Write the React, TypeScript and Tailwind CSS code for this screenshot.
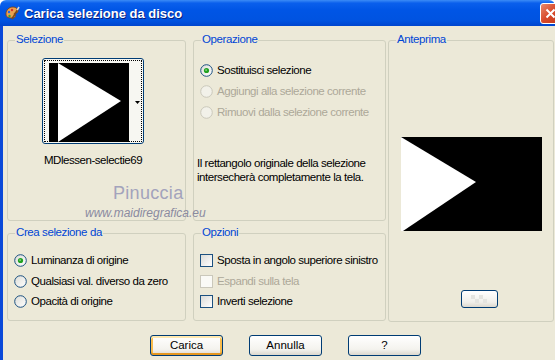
import React from "react";

const font = "font-['Liberation_Sans',Arial,sans-serif]";

const Radio = ({ checked = false, disabled = false }: { checked?: boolean; disabled?: boolean }) => (
  <svg width="13" height="13" viewBox="0 0 13 13" className="shrink-0">
    <defs>
      <linearGradient id="rg" x1="0" y1="0" x2="1" y2="1">
        <stop offset="0" stopColor="#DCDCD7" />
        <stop offset="1" stopColor="#FFFFFF" />
      </linearGradient>
    </defs>
    <circle
      cx="6.5"
      cy="6.5"
      r="5.8"
      fill={disabled ? "#F2F1E9" : "url(#rg)"}
      stroke={disabled ? "#CAC8BB" : "#1C5180"}
      strokeWidth="1"
    />
    {checked && (
      <>
        <circle cx="6.5" cy="6.5" r="2.6" fill="#21A121" />
        <circle cx="6.1" cy="6.1" r="0.9" fill="#8DDC8D" />
      </>
    )}
  </svg>
);

const Checkbox = ({ disabled = false }: { disabled?: boolean }) => (
  <div
    className={
      disabled
        ? "w-[13px] h-[13px] shrink-0 border border-[#CAC8BB] bg-[#FAFAF6]"
        : "w-[13px] h-[13px] shrink-0 border border-[#1C5180] bg-[linear-gradient(135deg,#DCDCD7,#FFFFFF)]"
    }
  />
);

const Group = ({
  label,
  className,
  children,
}: {
  label: string;
  className?: string;
  children?: React.ReactNode;
}) => (
  <div className={"relative border border-[#D0D0BF] rounded-[3px] " + (className ?? "")}>
    <span className="absolute -top-[8px] left-[7px] px-[1px] bg-[#ECE9D8] text-[#0046D5] leading-[13px] tracking-[-0.4px]">
      {label}
    </span>
    {children}
  </div>
);

const XPButton = ({ label, isDefault = false }: { label: string; isDefault?: boolean }) => (
  <div
    className={
      "w-[73px] h-[21px] flex items-center justify-center rounded-[3px] border border-[#003C74] bg-[linear-gradient(to_bottom,#FFFFFF,#F4F3EE_70%,#DCD8CE)] text-black " +
      (isDefault
        ? "shadow-[inset_0_2px_0_#FFE9B0,inset_0_-2px_0_#E5971F,inset_2px_0_0_#F9BC4C,inset_-2px_0_0_#F9BC4C]"
        : "")
    }
  >
    {label}
  </div>
);

const TitleIcon = () => (
  <svg width="16" height="16" viewBox="0 0 16 16">
    <path d="M2 9c0-4 3-7 7-7 3 0 5 2 5 4 0 2-2 2-3 2-1 0-1 1 0 2 1 1 0 3-3 3-4 0-6-1-6-4z" fill="#E9A250" stroke="#7A3C12" strokeWidth="0.8" />
    <circle cx="5" cy="7" r="1.2" fill="#2A62E0" />
    <circle cx="8" cy="5" r="1.2" fill="#D8302A" />
    <circle cx="5.5" cy="11" r="1.2" fill="#2EA43A" />
    <path d="M8 14 L14 4" stroke="#7A4A1C" strokeWidth="1.6" />
    <path d="M13.2 5.2 L15 2" stroke="#D9D9D9" strokeWidth="1.6" />
  </svg>
);

const TitleBar = () => (
  <div className="h-[26px] shrink-0 flex items-center rounded-t-[6px] bg-[linear-gradient(to_bottom,#3C8CF6_0%,#0A5FEC_12%,#0055E5_40%,#0053E0_80%,#0046CE_100%)]">
    <div className="ml-[4px] mr-[4px]">
      <TitleIcon />
    </div>
    <span className="text-white font-bold text-[13px] [text-shadow:1px_1px_0_#0A1E7A]">
      Carica selezione da disco
    </span>
    <div className="ml-auto -mr-[6px] mt-[1px] w-[21px] h-[21px] rounded-[3px] border border-white bg-[linear-gradient(135deg,#E88A6C,#D8492A_50%,#C23A1A)] flex items-center justify-center">
      <svg width="11" height="11" viewBox="0 0 11 11">
        <path d="M1.5 1.5 L9.5 9.5 M9.5 1.5 L1.5 9.5" stroke="white" strokeWidth="2" />
      </svg>
    </div>
  </div>
);

export default function App() {
  return (
    <div className={"w-[555px] h-[360px] overflow-hidden flex flex-col text-[11.5px] leading-[13px] " + font}>
      <TitleBar />
      <div className="flex flex-1">
        <div className="w-[3px] bg-[#0A49D9]" />
        <div className="relative flex-1 bg-[#ECE9D8] pl-[4px] pt-[14px]">
          <div className="flex">
            <div className="grid grid-cols-[179px_193px] grid-rows-[181px_88px] gap-x-[7px] gap-y-[12px]">
              <Group label="Selezione">
                <div className="ml-[34px] mt-[17px] w-[102px] flex flex-col items-center">
                  <div className="w-[102px] h-[86px] rounded-[3px] border border-[#003C74] bg-[#F7F7F2] p-[1px]">
                    <div className="w-full h-full border border-dotted border-black flex pl-[4px] pt-[2px]">
                      <svg width="80" height="79" viewBox="0 0 80 79" className="shrink-0">
                        <rect width="80" height="79" fill="black" />
                        <polygon points="9,0 72,38 9,79" fill="white" />
                      </svg>
                      <div className="flex-1 flex items-center justify-end pr-[1px]">
                        <svg width="5" height="3" viewBox="0 0 5 3">
                          <polygon points="0,0 5,0 2.5,3" fill="black" />
                        </svg>
                      </div>
                    </div>
                  </div>
                  <div className="mt-[10px] text-black tracking-[-0.45px] whitespace-nowrap">
                    MDlessen-selectie69
                  </div>
                </div>
              </Group>

              <Group label="Operazione">
                <div className="pt-[19px] pl-[6px] flex flex-col tracking-[-0.45px]">
                  <div className="h-[21px] flex items-center gap-[4px] text-black">
                    <Radio checked />
                    <span>Sostituisci selezione</span>
                  </div>
                  <div className="h-[21px] flex items-center gap-[4px] text-[#ACA899]">
                    <Radio disabled />
                    <span>Aggiungi alla selezione corrente</span>
                  </div>
                  <div className="h-[21px] flex items-center gap-[4px] text-[#ACA899]">
                    <Radio disabled />
                    <span>Rimuovi dalla selezione corrente</span>
                  </div>
                  <p className="mt-[33px] -ml-[3px] leading-[14px] text-black">
                    Il rettangolo originale della selezione
                    <br />
                    intersecherà completamente la tela.
                  </p>
                </div>
              </Group>

              <Group label="Crea selezione da">
                <div className="pt-[16px] pl-[6px] flex flex-col tracking-[-0.45px] text-black">
                  <div className="h-[21px] flex items-center gap-[4px]">
                    <Radio checked />
                    <span>Luminanza di origine</span>
                  </div>
                  <div className="h-[20px] flex items-center gap-[4px]">
                    <Radio />
                    <span>Qualsiasi val. diverso da zero</span>
                  </div>
                  <div className="h-[20px] flex items-center gap-[4px]">
                    <Radio />
                    <span>Opacità di origine</span>
                  </div>
                </div>
              </Group>

              <Group label="Opzioni">
                <div className="pt-[16px] pl-[6px] flex flex-col tracking-[-0.45px]">
                  <div className="h-[21px] flex items-center gap-[4px] text-black">
                    <Checkbox />
                    <span>Sposta in angolo superiore sinistro</span>
                  </div>
                  <div className="h-[20px] flex items-center gap-[4px] text-[#ACA899]">
                    <Checkbox disabled />
                    <span>Espandi sulla tela</span>
                  </div>
                  <div className="h-[20px] flex items-center gap-[4px] text-black">
                    <Checkbox />
                    <span>Inverti selezione</span>
                  </div>
                </div>
              </Group>
            </div>

            <Group label="Anteprima" className="ml-[2px] w-[166px] h-[282px]">
              <div className="flex flex-col items-center">
                <svg width="141" height="94" viewBox="0 0 141 94" className="mt-[96px]">
                  <rect width="141" height="94" fill="black" />
                  <polygon points="0,0 75,45 2,94 0,94" fill="white" />
                </svg>
                <div className="mt-[59px] ml-[16px] w-[37px] h-[18px] rounded-[3px] border border-[#003C74] bg-[linear-gradient(to_bottom,#FFFFFF,#F0EFEA_70%,#DCD8CE)] flex items-center justify-center">
                  <div className="grid grid-cols-4 w-[16px] h-[8px]">
                    <div className="bg-[#E4E4E0]" />
                    <div />
                    <div className="bg-[#E4E4E0]" />
                    <div />
                    <div />
                    <div className="bg-[#E4E4E0]" />
                    <div />
                    <div className="bg-[#E4E4E0]" />
                  </div>
                </div>
              </div>
            </Group>
          </div>

          <div className="flex mt-[13px] pl-[143px] gap-[26px]">
            <XPButton label="Carica" isDefault />
            <XPButton label="Annulla" />
            <XPButton label="?" />
          </div>

          <div className="absolute left-[110px] top-[157px] text-[18px] leading-[20px] text-[#A3A3BC] tracking-[0.3px] pointer-events-none">
            Pinuccia
          </div>
          <div className="absolute left-[82px] top-[180px] text-[12px] leading-[14px] italic text-[#8A8AA0] pointer-events-none">
            www.maidiregrafica.eu
          </div>
        </div>
      </div>
    </div>
  );
}
